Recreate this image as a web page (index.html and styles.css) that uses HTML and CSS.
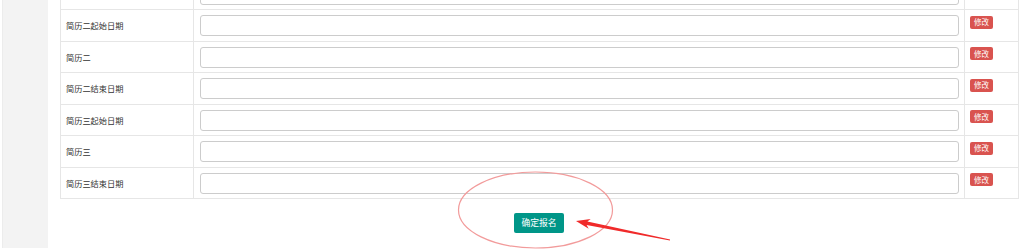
FILE: index.html
```html
<!DOCTYPE html>
<html lang="zh-CN">
<head>
<meta charset="utf-8">
<title>简历</title>
<link rel="stylesheet" href="styles.css">
</head>
<body>
<div class="page">
  <aside class="sidebar"></aside>
  <main class="main">
    <table class="form-table">
      <tr><td class="label">简历一结束日期</td><td class="field"><input class="text-input" type="text"></td><td class="action"><span class="edit-btn">修改</span></td></tr>
      <tr><td class="label">简历二起始日期</td><td class="field"><input class="text-input" type="text"></td><td class="action"><span class="edit-btn">修改</span></td></tr>
      <tr><td class="label">简历二</td><td class="field"><input class="text-input" type="text"></td><td class="action"><span class="edit-btn">修改</span></td></tr>
      <tr><td class="label">简历二结束日期</td><td class="field"><input class="text-input" type="text"></td><td class="action"><span class="edit-btn">修改</span></td></tr>
      <tr><td class="label">简历三起始日期</td><td class="field"><input class="text-input" type="text"></td><td class="action"><span class="edit-btn">修改</span></td></tr>
      <tr><td class="label">简历三</td><td class="field"><input class="text-input" type="text"></td><td class="action"><span class="edit-btn">修改</span></td></tr>
      <tr><td class="label">简历三结束日期</td><td class="field"><input class="text-input" type="text"></td><td class="action"><span class="edit-btn">修改</span></td></tr>
    </table>
    <div class="submit-row"><button class="submit-btn" type="button">确定报名</button></div>
  </main>
</div>
<svg class="annotation" width="1024" height="250" viewBox="0 0 1024 250">
  <ellipse cx="535.5" cy="210" rx="77" ry="38" fill="none" stroke="#f29b9b" stroke-width="1.2"/>
  <polygon points="576,221 590.7,218.9 587.4,221.6 670.1,239.6 669.9,240.6 586.6,225 588.7,228.7" fill="#f02a2a"/>
</svg>
</body>
</html>
```

FILE: styles.css
```css
html, body {
  margin: 0;
  padding: 0;
  background: #ffffff;
  overflow: hidden;
}
body {
  font-family: "Noto Sans CJK SC", "Noto Sans", sans-serif;
  color: #333333;
  width: 1024px;
  height: 250px;
  position: relative;
}
.page {
  display: flex;
  height: 250px;
}
.sidebar {
  width: 46px;
  margin-left: 2px;
  height: 248px;
  background: #f3f3f3;
  border-left: 1px solid #ececec;
  box-sizing: border-box;
  flex: none;
}
.main {
  flex: 1;
  padding: 0 6px 0 12px;
  margin-top: -22.5px;
}
.form-table {
  width: 958px;
  border-collapse: collapse;
  table-layout: fixed;
}
.form-table td {
  border: 1px solid #e6e6e6;
  height: 31.5px;
  box-sizing: border-box;
  padding: 0;
  vertical-align: middle;
}
.label {
  width: 133px;
  padding-left: 5px !important;
  font-size: 8.2px;
  color: #333;
  white-space: nowrap;
}
.field {
  width: 771px;
  padding: 0 5px 0 6px !important;
}
.text-input {
  display: block;
  width: 100%;
  height: 21px;
  box-sizing: border-box;
  border: 1px solid #cccccc;
  border-radius: 3px;
  background: #fff;
  margin: 0.5px 0 0 0;
  padding: 0;
}
.action {
  width: 54px;
  vertical-align: top !important;
  padding: 5.5px 0 0 5px !important;
  font-size: 0;
  line-height: 0;
}
.edit-btn {
  display: flex;
  align-items: center;
  justify-content: center;
  width: 23px;
  height: 13px;
  background: #d9534f;
  color: #fff;
  font-size: 7.5px;
  border-radius: 2px;
  line-height: 1;
}
.submit-row {
  display: flex;
  justify-content: center;
  width: 958px;
  margin-top: 13.5px;
}
.submit-btn {
  width: 50px;
  height: 20px;
  padding: 0;
  border: none;
  border-radius: 2px;
  background: #009688;
  color: #fff;
  font-family: "Noto Sans CJK SC", sans-serif;
  font-size: 8.8px;
  line-height: 20px;
}
.annotation {
  position: absolute;
  left: 0;
  top: 0;
  pointer-events: none;
}
```
